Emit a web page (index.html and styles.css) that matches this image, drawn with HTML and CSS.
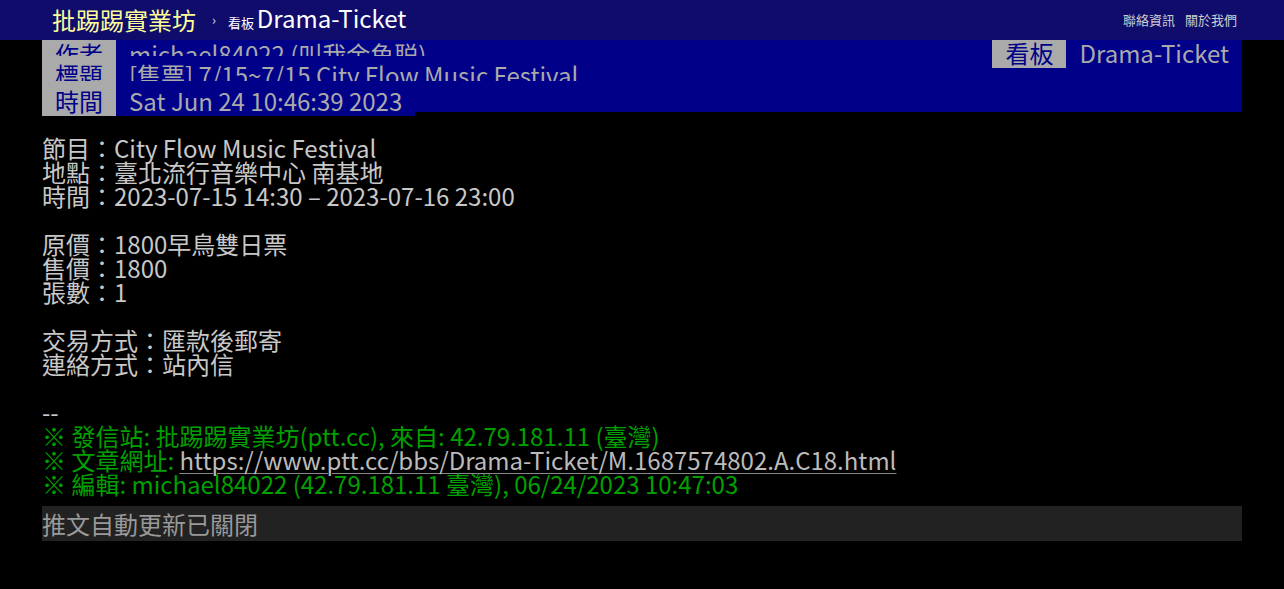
FILE: index.html
```html
<!DOCTYPE html>
<html lang="zh-Hant">
<head>
    <meta charset="UTF-8">
    <meta name="viewport" content="width=device-width, initial-scale=1.0">
    <title>[售票] 7/15~7/15 City Flow Music Festival - 看板 Drama-Ticket - 批踢踢實業坊</title>
    <link rel="stylesheet" href="styles.css">
</head>
<body>
    <div id="topbar-container">
        <div id="topbar">
            <a id="logo" href="#">批踢踢實業坊</a>
            <span class="sep">›</span>
            <a class="board" href="#"><span class="board-label">看板 </span>Drama-Ticket</a>
            <div class="right">
                <a href="#">聯絡資訊</a>
                <a href="#">關於我們</a>
            </div>
        </div>
    </div>

    <div id="main-container">
        <div id="main-content">
            <div class="article-meta">
                <div class="article-metaline">
                    <span class="article-meta-tag">作者</span>
                    <span class="article-meta-value">michael84022 (叫我余鱼聪)</span>
                </div>
                <div class="article-metaline">
                    <span class="article-meta-tag">標題</span>
                    <span class="article-meta-value">[售票] 7/15~7/15 City Flow Music Festival</span>
                </div>
                <div class="article-metaline last">
                    <span class="article-meta-tag">時間</span>
                    <span class="article-meta-value">Sat Jun 24 10:46:39 2023</span>
                </div>
                <div class="article-metaline-right">
                    <span class="article-meta-tag">看板</span>
                    <span class="article-meta-value">Drama-Ticket</span>
                </div>
            </div>
<div class="article-body">節目：City Flow Music Festival
地點：臺北流行音樂中心 南基地
時間：2023-07-15 14:30 – 2023-07-16 23:00

原價：1800早鳥雙日票
售價：1800
張數：1

交易方式：匯款後郵寄
連絡方式：站內信

--
<span class="f2">※ 發信站: 批踢踢實業坊(ptt.cc), 來自: 42.79.181.11 (臺灣)</span>
<span class="f2">※ 文章網址: </span><a href="#">https://www.ptt.cc/bbs/Drama-Ticket/M.1687574802.A.C18.html</a>
<span class="f2">※ 編輯: michael84022 (42.79.181.11 臺灣), 06/24/2023 10:47:03</span></div>
            <div class="push-notice">推文自動更新已關閉</div>
        </div>
    </div>
</body>
</html>
```
FILE: styles.css
```css
body {
    margin: 0;
    padding: 0;
    background: #000;
    color: #ccc;
    font-family: "Noto Sans CJK TC", "Noto Sans", sans-serif;
}
a {
    color: inherit;
    text-decoration: none;
}

/* top bar */
#topbar-container {
    position: fixed;
    top: 0;
    left: 0;
    width: 100%;
    height: 40px;
    background: #100c6c;
    z-index: 10;
}
#topbar {
    width: 1200px;
    margin: 0 auto;
    height: 40px;
    display: flex;
    align-items: center;
    line-height: 40px;
    white-space: nowrap;
}
#logo {
    font-size: 24px;
    color: #ffff99;
    padding: 0 10px;
}
#topbar .sep {
    font-size: 13px;
    color: #ddd;
    padding: 0 12px 0 6px;
}
#topbar .board {
    font-size: 24px;
    color: #fff;
}
#topbar .board-label {
    font-size: 13px;
}
#topbar .right {
    margin-left: auto;
    display: flex;
}
#topbar .right a {
    font-size: 13px;
    color: #ccc;
    padding: 0 5px;
}

/* article */
#main-container {
    padding-top: 33px;
}
#main-content {
    width: 1200px;
    margin: 0 auto;
    font-size: 24px;
    line-height: 24px;
}
.article-meta {
    position: relative;
    height: 79px;
    background: #000088;
}
.article-metaline {
    display: flex;
    height: 23px;
    overflow: hidden;
}
.article-metaline + .article-metaline {
    height: 25px;
}
.article-metaline.last {
    height: 35px;
    overflow: visible;
}
.article-meta-tag {
    background: #aaa;
    color: #000088;
    padding: 9px 13px 0;
    white-space: nowrap;
}
.article-meta-value {
    flex: 1;
    background: #000088;
    color: #aaa;
    padding: 9px 13px 0 13px;
    white-space: nowrap;
}
.article-metaline + .article-metaline .article-meta-tag,
.article-metaline + .article-metaline .article-meta-value {
    padding-top: 7px;
}
.article-metaline.last .article-meta-tag,
.article-metaline.last .article-meta-value {
    padding-top: 8px;
}
.article-metaline.last .article-meta-value {
    flex: none;
}
.article-metaline-right {
    position: absolute;
    top: 0;
    right: 0;
    display: flex;
    height: 35px;
}
.article-metaline-right .article-meta-tag,
.article-metaline-right .article-meta-value {
    padding-top: 8px;
    padding-right: 13px;
}
.article-metaline-right .article-meta-tag {
    padding-left: 13px;
}
.article-metaline-right .article-meta-value {
    background: transparent;
}

.article-body {
    margin-top: 24px;
    white-space: pre-wrap;
    color: #c8c8c8;
}
.article-body .f2 {
    color: #00a000;
}
.article-body a {
    color: #bbb;
    text-decoration: underline;
    text-decoration-color: #888;
    text-decoration-thickness: 1px;
    text-underline-offset: 3px;
}

.push-notice {
    margin-top: 10px;
    height: 35px;
    line-height: 35px;
    background: #222;
    color: #999;
}
```
